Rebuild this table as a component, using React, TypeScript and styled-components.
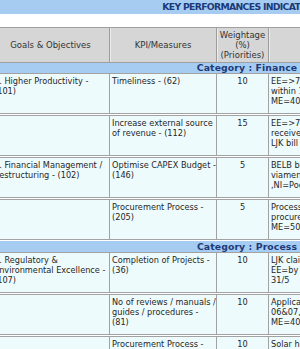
import styled, { createGlobalStyle } from 'styled-components'

const Global = createGlobalStyle`
  html, body { margin: 0; padding: 0; background: #ffffff; }
  body { font-family: "DejaVu Sans", Verdana, sans-serif; font-size: 8.2px; color: #222; }
`

const Viewport = styled.div`
  width: 300px;
  height: 349px;
  overflow: hidden;
`

const Sheet = styled.div`
  width: 510px;
  margin-left: -8px;
`

const BlueBar = styled.div<{ $h: number; $title?: boolean }>`
  height: ${p => p.$h}px;
  line-height: ${p => p.$h}px;
  background: #a6ccf2;
  color: #1c3a78;
  font-size: 9.3px;
  font-weight: bold;
  text-align: center;
  letter-spacing: ${p => p.$title ? '-0.7px' : '0.1px'};
  padding-right: ${p => p.$title ? '12px' : '0'};
`

const Blank = styled.div`
  height: 13px;
  background: #ffffff;
  border-bottom: 1px solid #a0a0a0;
`

const cols = '118px 107px 52px 130px 1fr'

const HeadRow = styled.div`
  display: grid;
  grid-template-columns: ${cols};
  height: 34px;
  background: #d6d6d6;
  border-bottom: 1px solid #a0a0a0;
`

const HeadCell = styled.div`
  border-right: 1px solid #9c9c9c;
  box-shadow: inset 1px 0 0 #ececec;
  display: flex;
  align-items: center;
  justify-content: center;
  text-align: center;
  line-height: 10px;
  font-size: 8.5px;
  color: #333;
`

const Row = styled.div`
  display: grid;
  grid-template-columns: ${cols};
  height: 39px;
  background: #eefbfc;
  border-top: 1px solid #a2a2a2;
  border-bottom: 1px solid #a2a2a2;
  margin-bottom: 1px;
`

const Cell = styled.div<{ $center?: boolean }>`
  border-right: 1px solid #a2a2a2;
  padding: 2px 2px 0 2px;
  line-height: 10px;
  text-align: ${p => p.$center ? 'center' : 'left'};
  white-space: nowrap;
  overflow: hidden;
  color: #262626;
`

type Item = { goal: string[]; kpi: string[]; weight: string; target: string[] }

const finance: Item[] = [
  { goal: ['1. Higher Productivity -', '(101)'], kpi: ['Timeliness - (62)'], weight: '10', target: ['EE=>70% bills paid', 'within 14 days,', 'ME=40-69%'] },
  { goal: [], kpi: ['Increase external source', 'of revenue - (112)'], weight: '15', target: ['EE=>70% claims', 'received from', 'LJK bill'] },
  { goal: ['2. Financial Management /', 'Restructuring - (102)'], kpi: ['Optimise CAPEX Budget -', '(146)'], weight: '5', target: ['BELB budget', 'viamen variance', ',NI=Poor'] },
  { goal: [], kpi: ['Procurement Process -', '(205)'], weight: '5', target: ['Process of', 'procurement', 'ME=50-69%'] },
]

const process: Item[] = [
  { goal: ['3. Regulatory &', 'Environmental Excellence -', '(107)'], kpi: ['Completion of Projects -', '(36)'], weight: '10', target: ['LJK claim', 'EE=by 30/4, ME=by', '31/5'] },
  { goal: [], kpi: ['No of reviews / manuals /', 'guides / procedures -', '(81)'], weight: '10', target: ['Application', '06&07, 08', 'ME=40-69%'] },
  { goal: [], kpi: ['Procurement Process -', '(206)'], weight: '10', target: ['Solar hot water'] },
]

const Lines = ({ lines }: { lines: string[] }) => (
  <>
    {lines.map((l, i) => <div key={i}>{l}</div>)}
  </>
)

const DataRow = ({ item }: { item: Item }) => (
  <Row>
    <Cell><Lines lines={item.goal} /></Cell>
    <Cell><Lines lines={item.kpi} /></Cell>
    <Cell $center>{item.weight}</Cell>
    <Cell><Lines lines={item.target} /></Cell>
    <Cell></Cell>
  </Row>
)

const App = () => {
  return (
    <Viewport>
      <Global />
      <Sheet>
        <BlueBar $h={14} $title>KEY PERFORMANCES INDICATORS</BlueBar>
        <Blank />
        <HeadRow>
          <HeadCell>Goals &amp; Objectives</HeadCell>
          <HeadCell>KPI/Measures</HeadCell>
          <HeadCell>Weightage<br />(%)<br />(Priorities)</HeadCell>
          <HeadCell>Target</HeadCell>
          <HeadCell>Achievement</HeadCell>
        </HeadRow>
        <BlueBar $h={10}>Category : Finance</BlueBar>
        {finance.map((it, i) => <DataRow key={i} item={it} />)}
        <BlueBar $h={11}>Category : Process</BlueBar>
        {process.map((it, i) => <DataRow key={i} item={it} />)}
      </Sheet>
    </Viewport>
  )
}

export default App
